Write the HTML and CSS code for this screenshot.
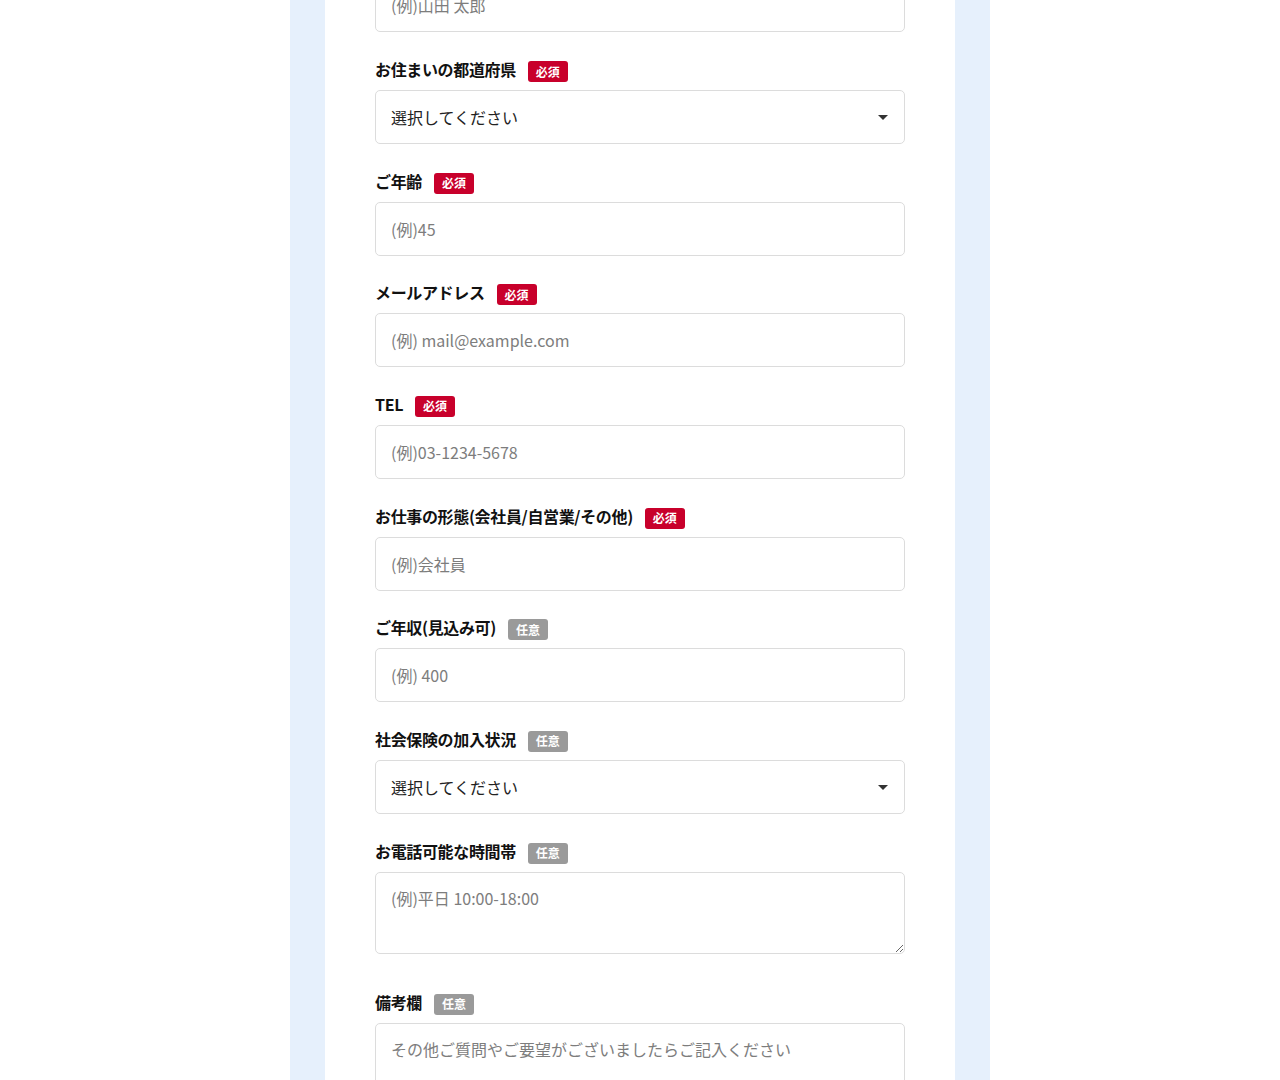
FILE: index.html
```html
<!DOCTYPE html>
<html lang="ja">
<head>
<meta charset="utf-8">
<title>お問い合わせフォーム</title>
<link rel="stylesheet" href="styles.css">
</head>
<body>
<div class="page">
  <div class="sheet">
    <form class="form">
      <div class="field field-first">
        <input class="control" type="text" placeholder="(例)山田 太郎">
      </div>

      <div class="field">
        <label class="label">お住まいの都道府県<span class="badge req">必須</span></label>
        <div class="select-wrap">
          <select class="control select">
            <option>選択してください</option>
          </select>
        </div>
      </div>

      <div class="field">
        <label class="label">ご年齢<span class="badge req">必須</span></label>
        <input class="control" type="text" placeholder="(例)45">
      </div>

      <div class="field">
        <label class="label">メールアドレス<span class="badge req">必須</span></label>
        <input class="control" type="text" placeholder="(例) mail@example.com">
      </div>

      <div class="field">
        <label class="label">TEL<span class="badge req">必須</span></label>
        <input class="control" type="text" placeholder="(例)03-1234-5678">
      </div>

      <div class="field">
        <label class="label">お仕事の形態(会社員/自営業/その他)<span class="badge req">必須</span></label>
        <input class="control" type="text" placeholder="(例)会社員">
      </div>

      <div class="field">
        <label class="label">ご年収(見込み可)<span class="badge opt">任意</span></label>
        <input class="control" type="text" placeholder="(例) 400">
      </div>

      <div class="field">
        <label class="label">社会保険の加入状況<span class="badge opt">任意</span></label>
        <div class="select-wrap">
          <select class="control select">
            <option>選択してください</option>
          </select>
        </div>
      </div>

      <div class="field field-area">
        <label class="label">お電話可能な時間帯<span class="badge opt">任意</span></label>
        <textarea class="control area" placeholder="(例)平日 10:00-18:00"></textarea>
      </div>

      <div class="field">
        <label class="label">備考欄<span class="badge opt">任意</span></label>
        <textarea class="control area tall" placeholder="その他ご質問やご要望がございましたらご記入ください"></textarea>
      </div>
    </form>
  </div>
</div>
</body>
</html>
```

FILE: styles.css
```css
html, body {
  margin: 0;
  padding: 0;
  background-color: white;
}

body {
  font-family: "Noto Sans CJK JP", "Noto Sans", sans-serif;
  color: #222;
  overflow: hidden;
  height: 1080px;
}

.page {
  width: 700px;
  margin: 0 auto;
  padding: 0 35px;
  box-sizing: border-box;
  background-color: #e6f0fc;
  min-height: 1080px;
}

.sheet {
  background-color: white;
  padding: 0 50px;
  min-height: 1080px;
}

.form {
  display: flex;
  flex-direction: column;
}

.field {
  display: flex;
  flex-direction: column;
  margin-bottom: 25.67px;
}

.field-first {
  margin-top: -22px;
  margin-bottom: 26px;
}

.field-area {
  margin-bottom: 37px;
}

.label {
  display: flex;
  align-items: flex-start;
  height: 24px;
  margin-bottom: 8px;
  font-size: 16px;
  font-weight: bold;
  line-height: 23px;
  letter-spacing: -0.35px;
  color: #111;
}

.badge {
  display: inline-flex;
  align-items: center;
  justify-content: center;
  width: 40px;
  height: 21px;
  margin-top: 3px;
  margin-left: 12px;
  border-radius: 3px;
  font-size: 12px;
  font-weight: bold;
  letter-spacing: 0;
  color: white;
  line-height: 1;
}

.req {
  background-color: #c8002b;
}

.opt {
  background-color: #9a9a9a;
}

.control {
  display: block;
  width: 100%;
  height: 54px;
  box-sizing: border-box;
  padding: 0 15px;
  border: 1px solid #dcdcdc;
  border-radius: 5px;
  background-color: white;
  font-family: "Noto Sans CJK JP", "Noto Sans", sans-serif;
  font-size: 16px;
  color: #222;
  outline: none;
}

.control::placeholder {
  color: #7d7d7d;
}

.select-wrap {
  position: relative;
}

.select {
  appearance: none;
  -webkit-appearance: none;
  color: #222;
}

.select-wrap::after {
  content: "";
  position: absolute;
  right: 17px;
  top: 25px;
  border-left: 5px solid transparent;
  border-right: 5px solid transparent;
  border-top: 5px solid #333;
}

.area {
  height: 82px;
  padding: 12px 15px;
  line-height: 26px;
  resize: vertical;
}

.tall {
  height: 120px;
}
```
